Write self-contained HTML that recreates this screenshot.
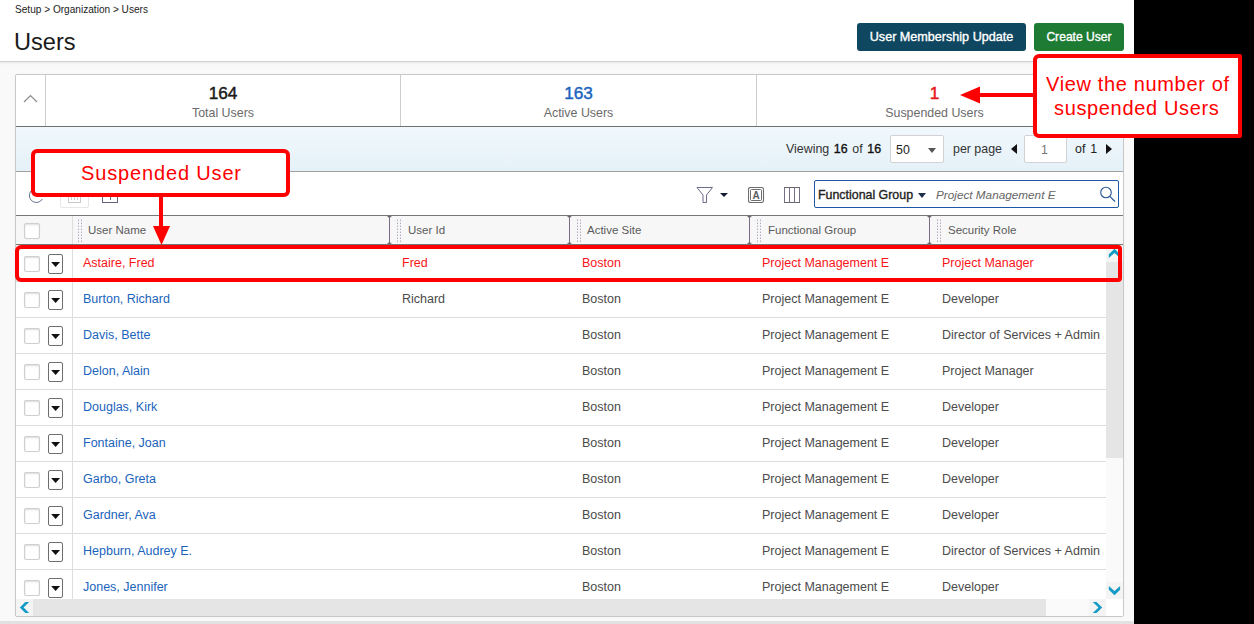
<!DOCTYPE html>
<html><head><meta charset="utf-8">
<style>
*{margin:0;padding:0;box-sizing:border-box}
html,body{width:1254px;height:624px;overflow:hidden;background:#000}
body{position:relative;font-family:"Liberation Sans",sans-serif}
.a{position:absolute;white-space:nowrap;line-height:1}
#page{position:absolute;left:0;top:0;width:1134px;height:624px;background:#f9f9f9;overflow:hidden}
#hdr{position:absolute;left:0;top:0;width:1134px;height:62px;background:#fff;border-bottom:1px solid #cfcfcf}
#hshadow{position:absolute;left:0;top:62px;width:1134px;height:3px;background:linear-gradient(#ededed,#f9f9f9)}
.btn{position:absolute;top:23px;height:28px;border-radius:3px;color:#fff;font-weight:normal;-webkit-text-stroke:0.35px #fff;font-size:12.6px;line-height:28px;text-align:center}
#panel{position:absolute;left:15px;top:74px;width:1109px;height:543px;border:1px solid #c9c9c9;border-radius:2px;background:#fff;box-shadow:0 0 2px #eee}
.vsep{position:absolute;width:1px;background:#cdcdcd}
.hline{position:absolute;height:1px}
.num{position:absolute;font-weight:normal;-webkit-text-stroke:0.45px currentColor;font-size:17.2px;line-height:1;text-align:center}
.lbl{position:absolute;font-size:12.4px;color:#6b6b6b;line-height:1;text-align:center}
.cell{position:absolute;font-size:12.5px;line-height:1;white-space:nowrap;color:#4b4b4b}
.blue{color:#1b64bc}
.red{color:#f9141a}
.cb{position:absolute;left:24px;width:16px;height:16px;border:1px solid #cfcfcf;border-radius:2px;background:#fff;box-shadow:inset 0 1px 2px #dedede,0 0 1px #e8e8e8}
.dd{position:absolute;left:48px;width:15px;height:20px;border:1px solid #6e6e6e;border-radius:2px;background:#fff}
.dd:after{content:"";position:absolute;left:1.9px;top:6.8px;width:9.4px;height:5.2px;background:#111;clip-path:polygon(0 0,100% 0,50% 100%)}
.hcol{position:absolute;top:216px;height:28px;font-size:11.5px;color:#5a5a5a;line-height:28px}
.grip{position:absolute;top:219px;width:4px;height:26px}
.ann{position:absolute;border:4px solid #ff0000;border-radius:6px;background:#fff}
.annt{position:absolute;color:#ff0000;font-size:20px;line-height:1;white-space:nowrap;letter-spacing:0.65px}
</style></head><body>
<div id="page">
  <div id="hdr"></div>
  <div id="hshadow"></div>
  <div class="a" style="left:15px;top:5px;font-size:10.1px;color:#222">Setup &gt; Organization &gt; Users</div>
  <div class="a" style="left:14px;top:30.5px;font-size:23.6px;color:#1a1a1a">Users</div>
  <div class="btn" style="left:857px;width:169px;background:#0f4760">User Membership Update</div>
  <div class="btn" style="left:1034px;width:90px;background:#1d7b33;font-size:12.1px">Create User</div>

  <div id="panel"></div>
  <!-- stats -->
  <div class="vsep" style="left:45px;top:75px;height:51px"></div>
  <div class="vsep" style="left:400px;top:75px;height:51px"></div>
  <div class="vsep" style="left:756px;top:75px;height:51px"></div>
  <svg class="a" style="left:22px;top:93px" width="17" height="11" viewBox="0 0 17 11"><path d="M2 9 L8.5 2.5 L15 9" fill="none" stroke="#8c8c8c" stroke-width="1.2"/></svg>
  <div class="num" style="left:46px;width:354px;top:84.6px;color:#1b1b1b">164</div>
  <div class="lbl" style="left:46px;width:354px;top:107px">Total Users</div>
  <div class="num" style="left:401px;width:355px;top:84.6px;color:#1d64bd">163</div>
  <div class="lbl" style="left:401px;width:355px;top:107px">Active Users</div>
  <div class="num" style="left:758px;width:353px;top:84.6px;color:#e8151c">1</div>
  <div class="lbl" style="left:758px;width:353px;top:107px">Suspended Users</div>
  <div class="hline" style="left:16px;top:126px;width:1107px;background:#6f6f6f"></div>

  <!-- pagination bar -->
  <div class="a" style="left:16px;top:127px;width:1107px;height:44px;background:linear-gradient(#f0f8fc,#e5f1f8)"></div>
  <div class="hline" style="left:16px;top:171px;width:1107px;background:#a0a0a0"></div>
  <div class="a" style="left:786px;top:143px;font-size:12.4px;color:#333;word-spacing:1.2px">Viewing <span style="color:#111;-webkit-text-stroke:0.35px #111">16</span> of <span style="color:#111;-webkit-text-stroke:0.35px #111">16</span></div>
  <div class="a" style="left:890px;top:135px;width:54px;height:28px;background:#fff;border:1px solid #d2d2d2;border-radius:2px"></div>
  <div class="a" style="left:896px;top:144px;font-size:12.4px;color:#222">50</div>
  <div class="a" style="left:928px;top:148px;width:0;height:0;border-left:4.5px solid transparent;border-right:4.5px solid transparent;border-top:5px solid #555"></div>
  <div class="a" style="left:953px;top:143px;font-size:12.4px;color:#333">per page</div>
  <div class="a" style="left:1011px;top:144px;width:0;height:0;border-top:5px solid transparent;border-bottom:5px solid transparent;border-right:6px solid #111"></div>
  <div class="a" style="left:1024px;top:135px;width:43px;height:28px;background:#fff;border:1px solid #d2d2d2;border-radius:2px"></div>
  <div class="a" style="left:1041px;top:144px;font-size:12.4px;color:#777">1</div>
  <div class="a" style="left:1075px;top:143px;font-size:12.4px;color:#222;word-spacing:1.5px">of 1</div>
  <div class="a" style="left:1106px;top:144px;width:0;height:0;border-top:5px solid transparent;border-bottom:5px solid transparent;border-left:6px solid #111"></div>

  <!-- toolbar -->
  <div class="hline" style="left:16px;top:215px;width:1107px;background:#777"></div>
  <svg class="a" style="left:28px;top:187px" width="18" height="18" viewBox="0 0 18 18"><path d="M14.4 12 A7 7 0 1 1 11.8 2.4" fill="none" stroke="#65708c" stroke-width="1"/></svg>
  <div class="a" style="left:60px;top:182px;width:29px;height:26px;border:1px solid #e6e6e6;border-radius:2px"></div>
  <div class="a" style="left:68px;top:190px;width:13px;height:13px;border:1px solid #c9c9c9"></div><div class="a" style="left:71px;top:197px;width:1px;height:3px;background:#cfcfcf"></div><div class="a" style="left:74px;top:197px;width:1px;height:3px;background:#cfcfcf"></div><div class="a" style="left:77px;top:197px;width:1px;height:3px;background:#cfcfcf"></div>
  <div class="a" style="left:102px;top:188px;width:16px;height:15px;border:1px solid #66607a"></div>
  <div class="a" style="left:109.5px;top:192px;width:1.5px;height:8px;background:#5a6a8a"></div>

  <svg class="a" style="left:696px;top:186px" width="18" height="18" viewBox="0 0 18 18"><path d="M1 1.5 H16.5 L10.5 9 V16.5 H7 V9 Z" fill="none" stroke="#6b6b8a" stroke-width="1"/></svg>
  <div class="a" style="left:720px;top:193px;width:0;height:0;border-left:4px solid transparent;border-right:4px solid transparent;border-top:4px solid #141c33"></div>
  <svg class="a" style="left:748px;top:187px" width="17" height="17" viewBox="0 0 17 17"><rect x="0.5" y="0.5" width="15" height="15" rx="2" fill="none" stroke="#6e6e6e" stroke-width="1.1"/><rect x="2.5" y="2.5" width="11" height="11" rx="1" fill="none" stroke="#6e6e6e" stroke-width="1"/><text x="8" y="11.8" text-anchor="middle" font-family="Liberation Sans" font-weight="bold" font-size="10" fill="#5c5c5c">A</text></svg>
  <svg class="a" style="left:784px;top:187px" width="17" height="17" viewBox="0 0 17 17"><rect x="0.5" y="0.5" width="15" height="15" fill="none" stroke="#7a6d88" stroke-width="1"/><path d="M5.5 0.5 V15.5 M10.5 0.5 V15.5" stroke="#7a6d88" stroke-width="1"/><path d="M0 0.5 H16 M0 15.5 H16" stroke="#6a6a6a" stroke-width="1"/></svg>
  <div class="a" style="left:814px;top:180px;width:305px;height:28px;border:1.5px solid #1d58a6;border-radius:2px;background:#fff"></div>
  <div class="a" style="left:818px;top:188.5px;font-size:12.4px;-webkit-text-stroke:0.35px #222;color:#222">Functional Group</div>
  <div class="a" style="left:918px;top:193px;width:0;height:0;border-left:4.5px solid transparent;border-right:4.5px solid transparent;border-top:5px solid #1d2e4a"></div>
  <div class="a" style="left:936px;top:189px;font-size:11.75px;font-style:italic;color:#666">Project Management E</div>
  <svg class="a" style="left:1099px;top:186px" width="18" height="17" viewBox="0 0 18 17"><circle cx="7" cy="6.5" r="5.3" fill="none" stroke="#2a5696" stroke-width="1.1"/><path d="M10.8 10.3 L16 15.5" stroke="#2a5696" stroke-width="1.2"/></svg>

  <!-- grid header -->
  <div class="a" style="left:16px;top:216px;width:1107px;height:28px;background:#f7f7f7"></div>
  <div class="hline" style="left:16px;top:244px;width:1107px;background:#777"></div>
  <div class="cb" style="top:223px"></div>
  <div class="vsep" style="left:72px;top:216px;height:28px;background:#dedede"></div>
  <svg class="grip" style="left:78px;height:23px" width="4" height="23" viewBox="0 0 4 23" fill="#b9a9c3"><rect x="0" y="0.5" width="1" height="1.5"/><rect x="3" y="0.5" width="1" height="1.5"/><rect x="0" y="3.5" width="1" height="1.5"/><rect x="3" y="3.5" width="1" height="1.5"/><rect x="0" y="6.5" width="1" height="1.5"/><rect x="3" y="6.5" width="1" height="1.5"/><rect x="0" y="9.5" width="1" height="1.5"/><rect x="3" y="9.5" width="1" height="1.5"/><rect x="0" y="12.5" width="1" height="1.5"/><rect x="3" y="12.5" width="1" height="1.5"/><rect x="0" y="15.5" width="1" height="1.5"/><rect x="3" y="15.5" width="1" height="1.5"/><rect x="0" y="18.5" width="1" height="1.5"/><rect x="3" y="18.5" width="1" height="1.5"/><rect x="0" y="21.5" width="1" height="1.5"/><rect x="3" y="21.5" width="1" height="1.5"/></svg>
  <div class="hcol" style="left:88px">User Name</div>
  <svg class="a" style="left:386px;top:215px" width="7" height="30" viewBox="0 0 7 30"><rect x="3" y="0" width="1" height="30" fill="#7b6d88"/><path d="M0.9 1 H5.9 L3.5 3.3 Z M0.9 29 H5.9 L3.5 26.7 Z" fill="#6a6a6a"/></svg>
  <svg class="grip" style="left:397px;height:23px" width="4" height="23" viewBox="0 0 4 23" fill="#b9a9c3"><rect x="0" y="0.5" width="1" height="1.5"/><rect x="3" y="0.5" width="1" height="1.5"/><rect x="0" y="3.5" width="1" height="1.5"/><rect x="3" y="3.5" width="1" height="1.5"/><rect x="0" y="6.5" width="1" height="1.5"/><rect x="3" y="6.5" width="1" height="1.5"/><rect x="0" y="9.5" width="1" height="1.5"/><rect x="3" y="9.5" width="1" height="1.5"/><rect x="0" y="12.5" width="1" height="1.5"/><rect x="3" y="12.5" width="1" height="1.5"/><rect x="0" y="15.5" width="1" height="1.5"/><rect x="3" y="15.5" width="1" height="1.5"/><rect x="0" y="18.5" width="1" height="1.5"/><rect x="3" y="18.5" width="1" height="1.5"/><rect x="0" y="21.5" width="1" height="1.5"/><rect x="3" y="21.5" width="1" height="1.5"/></svg>
  <div class="hcol" style="left:408px">User Id</div>
  <svg class="a" style="left:566px;top:215px" width="7" height="30" viewBox="0 0 7 30"><rect x="3" y="0" width="1" height="30" fill="#7b6d88"/><path d="M0.9 1 H5.9 L3.5 3.3 Z M0.9 29 H5.9 L3.5 26.7 Z" fill="#6a6a6a"/></svg>
  <svg class="grip" style="left:577px;height:23px" width="4" height="23" viewBox="0 0 4 23" fill="#b9a9c3"><rect x="0" y="0.5" width="1" height="1.5"/><rect x="3" y="0.5" width="1" height="1.5"/><rect x="0" y="3.5" width="1" height="1.5"/><rect x="3" y="3.5" width="1" height="1.5"/><rect x="0" y="6.5" width="1" height="1.5"/><rect x="3" y="6.5" width="1" height="1.5"/><rect x="0" y="9.5" width="1" height="1.5"/><rect x="3" y="9.5" width="1" height="1.5"/><rect x="0" y="12.5" width="1" height="1.5"/><rect x="3" y="12.5" width="1" height="1.5"/><rect x="0" y="15.5" width="1" height="1.5"/><rect x="3" y="15.5" width="1" height="1.5"/><rect x="0" y="18.5" width="1" height="1.5"/><rect x="3" y="18.5" width="1" height="1.5"/><rect x="0" y="21.5" width="1" height="1.5"/><rect x="3" y="21.5" width="1" height="1.5"/></svg>
  <div class="hcol" style="left:587px">Active Site</div>
  <svg class="a" style="left:746px;top:215px" width="7" height="30" viewBox="0 0 7 30"><rect x="3" y="0" width="1" height="30" fill="#7b6d88"/><path d="M0.9 1 H5.9 L3.5 3.3 Z M0.9 29 H5.9 L3.5 26.7 Z" fill="#6a6a6a"/></svg>
  <svg class="grip" style="left:757px;height:23px" width="4" height="23" viewBox="0 0 4 23" fill="#b9a9c3"><rect x="0" y="0.5" width="1" height="1.5"/><rect x="3" y="0.5" width="1" height="1.5"/><rect x="0" y="3.5" width="1" height="1.5"/><rect x="3" y="3.5" width="1" height="1.5"/><rect x="0" y="6.5" width="1" height="1.5"/><rect x="3" y="6.5" width="1" height="1.5"/><rect x="0" y="9.5" width="1" height="1.5"/><rect x="3" y="9.5" width="1" height="1.5"/><rect x="0" y="12.5" width="1" height="1.5"/><rect x="3" y="12.5" width="1" height="1.5"/><rect x="0" y="15.5" width="1" height="1.5"/><rect x="3" y="15.5" width="1" height="1.5"/><rect x="0" y="18.5" width="1" height="1.5"/><rect x="3" y="18.5" width="1" height="1.5"/><rect x="0" y="21.5" width="1" height="1.5"/><rect x="3" y="21.5" width="1" height="1.5"/></svg>
  <div class="hcol" style="left:768px">Functional Group</div>
  <svg class="a" style="left:926px;top:215px" width="7" height="30" viewBox="0 0 7 30"><rect x="3" y="0" width="1" height="30" fill="#7b6d88"/><path d="M0.9 1 H5.9 L3.5 3.3 Z M0.9 29 H5.9 L3.5 26.7 Z" fill="#6a6a6a"/></svg>
  <svg class="grip" style="left:937px;height:23px" width="4" height="23" viewBox="0 0 4 23" fill="#b9a9c3"><rect x="0" y="0.5" width="1" height="1.5"/><rect x="3" y="0.5" width="1" height="1.5"/><rect x="0" y="3.5" width="1" height="1.5"/><rect x="3" y="3.5" width="1" height="1.5"/><rect x="0" y="6.5" width="1" height="1.5"/><rect x="3" y="6.5" width="1" height="1.5"/><rect x="0" y="9.5" width="1" height="1.5"/><rect x="3" y="9.5" width="1" height="1.5"/><rect x="0" y="12.5" width="1" height="1.5"/><rect x="3" y="12.5" width="1" height="1.5"/><rect x="0" y="15.5" width="1" height="1.5"/><rect x="3" y="15.5" width="1" height="1.5"/><rect x="0" y="18.5" width="1" height="1.5"/><rect x="3" y="18.5" width="1" height="1.5"/><rect x="0" y="21.5" width="1" height="1.5"/><rect x="3" y="21.5" width="1" height="1.5"/></svg>
  <div class="hcol" style="left:948px">Security Role</div>

  <!-- rows -->
  <!--ROWS-->
<div class="cb" style="top:256px"></div>
<div class="dd" style="top:254px"></div>
<div class="vsep" style="left:72px;top:245px;height:36px;background:#dedede"></div>
<div class="hline" style="left:16px;top:281px;width:1090px;background:#dcdcdc"></div>
<div class="cell red" style="left:83px;top:256.5px">Astaire, Fred</div>
<div class="cell red" style="left:402px;top:256.5px">Fred</div>
<div class="cell red" style="left:582px;top:256.5px">Boston</div>
<div class="cell red" style="left:762px;top:256.5px">Project Management E</div>
<div class="cell red" style="left:942px;top:256.5px">Project Manager</div>
<div class="cb" style="top:292px"></div>
<div class="dd" style="top:290px"></div>
<div class="vsep" style="left:72px;top:281px;height:36px;background:#dedede"></div>
<div class="hline" style="left:16px;top:317px;width:1090px;background:#dcdcdc"></div>
<div class="cell blue" style="left:83px;top:292.5px">Burton, Richard</div>
<div class="cell " style="left:402px;top:292.5px">Richard</div>
<div class="cell " style="left:582px;top:292.5px">Boston</div>
<div class="cell " style="left:762px;top:292.5px">Project Management E</div>
<div class="cell " style="left:942px;top:292.5px">Developer</div>
<div class="cb" style="top:328px"></div>
<div class="dd" style="top:326px"></div>
<div class="vsep" style="left:72px;top:317px;height:36px;background:#dedede"></div>
<div class="hline" style="left:16px;top:353px;width:1090px;background:#dcdcdc"></div>
<div class="cell blue" style="left:83px;top:328.5px">Davis, Bette</div>
<div class="cell " style="left:582px;top:328.5px">Boston</div>
<div class="cell " style="left:762px;top:328.5px">Project Management E</div>
<div class="cell " style="left:942px;top:328.5px">Director of Services + Admin</div>
<div class="cb" style="top:364px"></div>
<div class="dd" style="top:362px"></div>
<div class="vsep" style="left:72px;top:353px;height:36px;background:#dedede"></div>
<div class="hline" style="left:16px;top:389px;width:1090px;background:#dcdcdc"></div>
<div class="cell blue" style="left:83px;top:364.5px">Delon, Alain</div>
<div class="cell " style="left:582px;top:364.5px">Boston</div>
<div class="cell " style="left:762px;top:364.5px">Project Management E</div>
<div class="cell " style="left:942px;top:364.5px">Project Manager</div>
<div class="cb" style="top:400px"></div>
<div class="dd" style="top:398px"></div>
<div class="vsep" style="left:72px;top:389px;height:36px;background:#dedede"></div>
<div class="hline" style="left:16px;top:425px;width:1090px;background:#dcdcdc"></div>
<div class="cell blue" style="left:83px;top:400.5px">Douglas, Kirk</div>
<div class="cell " style="left:582px;top:400.5px">Boston</div>
<div class="cell " style="left:762px;top:400.5px">Project Management E</div>
<div class="cell " style="left:942px;top:400.5px">Developer</div>
<div class="cb" style="top:436px"></div>
<div class="dd" style="top:434px"></div>
<div class="vsep" style="left:72px;top:425px;height:36px;background:#dedede"></div>
<div class="hline" style="left:16px;top:461px;width:1090px;background:#dcdcdc"></div>
<div class="cell blue" style="left:83px;top:436.5px">Fontaine, Joan</div>
<div class="cell " style="left:582px;top:436.5px">Boston</div>
<div class="cell " style="left:762px;top:436.5px">Project Management E</div>
<div class="cell " style="left:942px;top:436.5px">Developer</div>
<div class="cb" style="top:472px"></div>
<div class="dd" style="top:470px"></div>
<div class="vsep" style="left:72px;top:461px;height:36px;background:#dedede"></div>
<div class="hline" style="left:16px;top:497px;width:1090px;background:#dcdcdc"></div>
<div class="cell blue" style="left:83px;top:472.5px">Garbo, Greta</div>
<div class="cell " style="left:582px;top:472.5px">Boston</div>
<div class="cell " style="left:762px;top:472.5px">Project Management E</div>
<div class="cell " style="left:942px;top:472.5px">Developer</div>
<div class="cb" style="top:508px"></div>
<div class="dd" style="top:506px"></div>
<div class="vsep" style="left:72px;top:497px;height:36px;background:#dedede"></div>
<div class="hline" style="left:16px;top:533px;width:1090px;background:#dcdcdc"></div>
<div class="cell blue" style="left:83px;top:508.5px">Gardner, Ava</div>
<div class="cell " style="left:582px;top:508.5px">Boston</div>
<div class="cell " style="left:762px;top:508.5px">Project Management E</div>
<div class="cell " style="left:942px;top:508.5px">Developer</div>
<div class="cb" style="top:544px"></div>
<div class="dd" style="top:542px"></div>
<div class="vsep" style="left:72px;top:533px;height:36px;background:#dedede"></div>
<div class="hline" style="left:16px;top:569px;width:1090px;background:#dcdcdc"></div>
<div class="cell blue" style="left:83px;top:544.5px">Hepburn, Audrey E.</div>
<div class="cell " style="left:582px;top:544.5px">Boston</div>
<div class="cell " style="left:762px;top:544.5px">Project Management E</div>
<div class="cell " style="left:942px;top:544.5px">Director of Services + Admin</div>
<div class="cb" style="top:580px"></div>
<div class="dd" style="top:578px"></div>
<div class="vsep" style="left:72px;top:569px;height:36px;background:#dedede"></div>
<div class="cell blue" style="left:83px;top:580.5px">Jones, Jennifer</div>
<div class="cell " style="left:582px;top:580.5px">Boston</div>
<div class="cell " style="left:762px;top:580.5px">Project Management E</div>
<div class="cell " style="left:942px;top:580.5px">Developer</div>
<!--/ROWS-->

  <!-- scrollbars -->
  <div class="a" style="left:1106px;top:245px;width:17px;height:354px;background:#fafafa"></div>
  <div class="a" style="left:1106px;top:245px;width:17px;height:17px;background:#f4f4f4"></div>
  <svg class="a" style="left:1106px;top:245px" width="17" height="17" viewBox="0 0 17 17"><path d="M2.8 13 L8.5 7.9 L14.1 13 V9.2 L8.5 3.8 L2.8 9.2 Z" fill="#169bc6"/></svg>
  <div class="a" style="left:1106px;top:262px;width:17px;height:196px;background:#e5e5e5"></div>
  <div class="a" style="left:1106px;top:582px;width:17px;height:17px;background:#f4f4f4"></div>
  <svg class="a" style="left:1106px;top:582px" width="17" height="17" viewBox="0 0 17 17"><path d="M2.8 4 L8.5 9.1 L14.1 4 V7.8 L8.5 13.2 L2.8 7.8 Z" fill="#169bc6"/></svg>
  <div class="a" style="left:16px;top:599px;width:1090px;height:17px;background:#fafafa"></div>
  <div class="a" style="left:16px;top:599px;width:17px;height:17px;background:#f4f4f4"></div>
  <svg class="a" style="left:16px;top:599px" width="17" height="17" viewBox="0 0 17 17"><path d="M13.1 3 H9.3 L3.8 8.4 L9.3 13.9 H13.1 L7.6 8.4 Z" fill="#169bc6"/></svg>
  <div class="a" style="left:33px;top:599px;width:1013px;height:17px;background:#e5e5e5"></div>
  <div class="a" style="left:1089px;top:599px;width:17px;height:17px;background:#f4f4f4"></div>
  <svg class="a" style="left:1089px;top:599px" width="17" height="17" viewBox="0 0 17 17"><path d="M3.7 3 H7.5 L13.2 8.4 L7.5 13.9 H3.7 L9.5 8.4 Z" fill="#169bc6"/></svg>
  <div class="a" style="left:1106px;top:599px;width:17px;height:17px;background:#fff"></div>

  <div class="a" style="left:0;top:621px;width:1134px;height:3px;background:#e2e2e2"></div>
</div>

<!-- annotations -->
<div class="ann" style="left:1033px;top:54px;width:209px;height:84px;border-radius:6px 2px 2px 6px"></div>
<div class="annt" style="left:1046px;top:74px">View the number of</div>
<div class="annt" style="left:1054px;top:98px">suspended Users</div>
<div class="a" style="left:979px;top:93px;width:54px;height:4px;background:#ff0000"></div>
<svg class="a" style="left:960px;top:86px" width="21" height="18" viewBox="0 0 21 18"><path d="M0 9 L20 0.5 V17.5 Z" fill="#ff0000"/></svg>

<div class="ann" style="left:31px;top:149px;width:259px;height:48px"></div>
<div class="annt" style="left:81px;top:163px;letter-spacing:0.85px">Suspended User</div>
<div class="a" style="left:158.5px;top:195px;width:4px;height:32px;background:#ff0000"></div>
<svg class="a" style="left:152.5px;top:226px" width="17" height="19" viewBox="0 0 17 19"><path d="M0 0 H17 L8.5 19 Z" fill="#ff0000"/></svg>

<div class="ann" style="left:15px;top:245px;width:1107px;height:37px;background:transparent;border-radius:6px 4px 4px 6px"></div>
</body></html>
